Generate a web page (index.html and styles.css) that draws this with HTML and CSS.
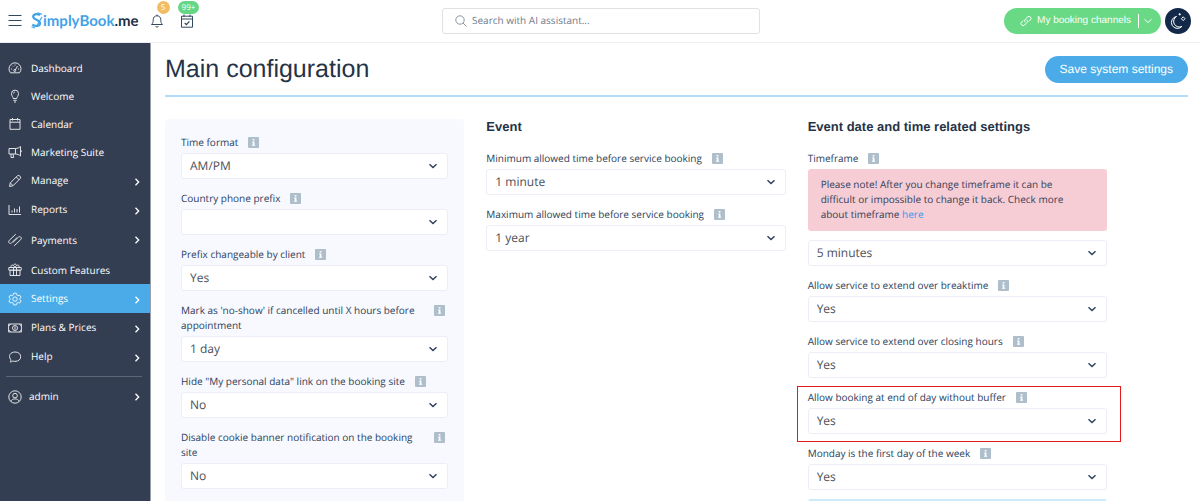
FILE: index.html
```html
<!DOCTYPE html>
<html lang="en">
<head>
<meta charset="utf-8">
<title>Main configuration</title>
<link rel="stylesheet" href="styles.css">
</head>
<body>
<svg class="sprite" aria-hidden="true">
  <symbol id="chev-down" viewBox="0 0 10 10"><path d="M1.5 3.2 5 6.6 8.500 3.200"/></symbol>
  <symbol id="chev-right" viewBox="0 0 10 10"><path d="M3.500 1.700 6.700 5 3.500 8.300"/></symbol>
  <symbol id="info" viewBox="0 0 11 11"><rect width="11" height="11" rx="1" fill="#afbecb" stroke="none"/><path d="M4.700 2h1.700v1.500H4.700zM4.100 4.500h2.300v3.300h.8v1H4v-1h.8V5.500h-.7z" fill="#fff" stroke="none"/></symbol>
</svg>
<header class="topbar">
  <button class="icon-btn menu-btn" aria-label="Menu"><svg viewBox="0 0 14 14"><path d="M.5 1.500h13M.5 6.500h13M.5 11.500h13"/></svg></button>
  <a class="logo" href="#" aria-label="SimplyBook.me">
    <svg class="logo-mark" viewBox="0 0 12 17"><path d="M9 3.400C7.500 1.500 2.200 1.600 2.200 4.800c0 3.300 6.800 2.700 6.800 6.400 0 3-4.500 3.700-7.700 1.500" stroke-width="2.200"/><path d="M6.500.8 11 2.300M.5 14.800l3.500 1.200M11 5 5 15" stroke-width="1.200"/></svg>
    <span class="logo-text">implyBook<span class="logo-me">.me</span></span>
  </a>
  <button class="icon-btn notice" aria-label="Notifications"><svg viewBox="0 0 14 14"><path d="M7 .6v1.200M1.500 10.500h11c-1.200-1.200-1.700-2-1.700-4.800 0-2.400-1.500-3.900-3.800-3.900S3.200 3.300 3.200 5.700c0 2.800-.5 3.600-1.700 4.800zM5.500 12.200c.5 1.200 2.500 1.200 3 0"/></svg><span class="badge badge-warn">5</span></button>
  <button class="icon-btn notice" aria-label="Tasks"><svg viewBox="0 0 14 14"><path d="M1.500 2.200h11v11h-11zM1.500 5h11M4 .5v2.500M10 .5v2.500"/><path d="m4.700 9 1.700 1.600 3-3.200" stroke-width="1.300"/></svg><span class="badge badge-ok">99+</span></button>
  <label class="search">
    <svg viewBox="0 0 12 12"><circle cx="5" cy="5" r="4.200"/><path d="m8 8 3.500 3.500"/></svg>
    <input type="search" placeholder="Search with AI assistant..." aria-label="Search">
  </label>
  <div class="top-actions">
    <button class="channels"><svg class="link-ico" viewBox="0 0 12 12"><path d="M5.200 7.200a2 2 0 0 1 0-2.900l2.300-2.300a2 2 0 0 1 2.900 2.900L8.800 6.500M6.800 4.800a2 2 0 0 1 0 2.900L4.500 10a2 2 0 0 1-2.900-2.900l1.600-1.600"/></svg><span>My booking channels</span><i class="split"></i><svg class="mini"><use href="#chev-down"/></svg></button>
    <button class="theme" aria-label="Dark mode"><svg viewBox="0 0 18 18"><path d="M7.500 4.500A6 6 0 1 0 13 14.300 5.500 5.500 0 0 1 7.500 4.500z"/><path d="m14.200 4.800 1.800 1.900-1.800 1.900-1.800-1.900zM10.700 1.200v2.200M9.600 2.300h2.200"/></svg></button>
  </div>
</header>
<div class="body">
  <nav class="sidebar">
    <ul class="nav">
      <li><a href="#"><svg viewBox="0 0 14 14"><path d="M2.500 11.800a6 6 0 1 1 9 0zM7 9.500l2.500-4.500M3 8h1M10 8h1M4.300 4.700l.7.700M7 3.500v1"/><circle cx="6.700" cy="9.500" r="1"/></svg>Dashboard</a></li>
      <li><a href="#"><svg viewBox="0 0 14 14"><path d="M5.200 9.500C5.200 8 3.500 7 3.500 4.600a3.500 3.500 0 0 1 7 0C10.500 7 8.800 8 8.800 9.500zM5.300 11.300h3.400M6 13h2M5.500 4.500C5.500 3.500 6 3 7 3"/></svg>Welcome</a></li>
      <li><a href="#"><svg viewBox="0 0 14 14"><path d="M2 2.500h10v9.800H2zM2 5.200h10M4.500 1v2.500M9.500 1v2.500"/></svg>Calendar</a></li>
      <li><a href="#"><svg viewBox="0 0 14 14"><path d="M1 3.500h6.500c2 0 3.500-.8 5-2v9.500c-1.500-1.200-3-2-5-2H1zM7.500 3.500V9M3 9v3.500h2.700L5 9M12.500 5c1.200.5 1.200 2 0 2.500"/></svg>Marketing Suite</a></li>
      <li class="sub"><a href="#"><svg viewBox="0 0 14 14"><path d="m1.500 12.500.8-3.600L9.600 1.600c1.200-1.200 4 1.600 2.800 2.800l-7.300 7.300zM8.300 3l2.800 2.800M2.300 8.900l2.800 2.800"/></svg>Manage<svg class="chev"><use href="#chev-right"/></svg></a></li>
      <li class="sub"><a href="#"><svg viewBox="0 0 14 14"><path d="M1 2v9.500h12M4 9.500v-2M6.500 9.500v-4M9 9.500V6M11.500 9.500v-6"/></svg>Reports<svg class="chev"><use href="#chev-right"/></svg></a></li>
      <li class="tall"><a href="#"><svg viewBox="0 0 14 14"><path d="M7.800 1.200 1.300 7.300c-1.700 1.800.5 4.200 2.300 2.500L9 4.700M6.200 12.800l6.500-6.100c1.700-1.800-.5-4.200-2.300-2.500L5 9.300"/></svg>Payments<svg class="chev"><use href="#chev-right"/></svg></a></li>
      <li><a href="#"><svg viewBox="0 0 14 14"><path d="M.8 4.500h12.400v2.700H.8zM2 7.200h10v5.300H2zM5.500 4.500v8M8.500 4.500v8M7 4.300C5 1 2.500 1.500 3 4.300M7 4.300c2-3.300 4.500-2.800 4 0M5.500 2 7 .8 8.500 2"/></svg>Custom Features</a></li>
      <li class="sub active"><a href="#"><svg viewBox="0 0 14 14"><path d="m5.700 1.200-.4 1.700-1.400.8-1.700-.5-1.300 2.200L2.200 6.600v1L.9 8.800 2.200 11l1.700-.5 1.400.8.4 1.600h2.600l.4-1.600 1.400-.8 1.700.5 1.300-2.200-1.300-1.200v-1l1.300-1.200-1.300-2.200-1.700.5-1.400-.8-.4-1.700z"/><circle cx="7" cy="7.100" r="2.200"/></svg>Settings<svg class="chev"><use href="#chev-right"/></svg></a></li>
      <li class="sub"><a href="#"><svg viewBox="0 0 14 14"><path d="M.6 3h12.800v8H.6zM.6 5.200l2-2.200M13.400 5.200l-2-2.200M.6 8.800l2 2.200M13.400 8.800l-2 2.200M7 5.500v3"/><circle cx="7" cy="7" r="2.500"/></svg>Plans &amp; Prices<svg class="chev"><use href="#chev-right"/></svg></a></li>
      <li class="sub"><a href="#"><svg viewBox="0 0 14 14"><path d="M2 12c1-.8 1-1.500.6-2.600C-.2 5.500 2.800 2 7 2c3.500 0 5.700 2 5.700 4.700S10.500 11.400 7 11.400c-1 0-1.700-.2-2.300-.4C4 11.600 3 12 2 12z"/></svg>Help<svg class="chev"><use href="#chev-right"/></svg></a></li>
    </ul>
    <a class="account" href="#"><svg viewBox="0 0 14 14"><circle cx="7" cy="7" r="6.200"/><circle cx="7" cy="5.600" r="2.300"/><path d="M3 11.500c.5-3.500 7.500-3.500 8 0"/></svg>admin<svg class="chev"><use href="#chev-right"/></svg></a>
  </nav>
  <main class="content">
    <div class="page-head">
      <h1>Main configuration</h1>
      <button class="save">Save system settings</button>
    </div>
    <form class="columns">
      <section class="panel">
        <div class="field"><div class="caption"><label for="tf">Time format</label><svg class="info"><use href="#info"/></svg></div><div class="pick"><select id="tf"><option>AM/PM</option></select><svg><use href="#chev-down"/></svg></div></div>
        <div class="field"><div class="caption"><label for="cp">Country phone prefix</label><svg class="info"><use href="#info"/></svg></div><div class="pick"><select id="cp"><option></option></select><svg><use href="#chev-down"/></svg></div></div>
        <div class="field"><div class="caption"><label for="pc">Prefix changeable by client</label><svg class="info"><use href="#info"/></svg></div><div class="pick"><select id="pc"><option>Yes</option></select><svg><use href="#chev-down"/></svg></div></div>
        <div class="field"><div class="caption"><label for="ns">Mark as 'no-show' if cancelled until X hours before appointment</label><svg class="info"><use href="#info"/></svg></div><div class="pick"><select id="ns"><option>1 day</option></select><svg><use href="#chev-down"/></svg></div></div>
        <div class="field"><div class="caption"><label for="hp">Hide "My personal data" link on the booking site</label><svg class="info"><use href="#info"/></svg></div><div class="pick"><select id="hp"><option>No</option></select><svg><use href="#chev-down"/></svg></div></div>
        <div class="field"><div class="caption"><label for="dc">Disable cookie banner notification on the booking site</label><svg class="info"><use href="#info"/></svg></div><div class="pick"><select id="dc"><option>No</option></select><svg><use href="#chev-down"/></svg></div></div>
      </section>
      <section>
        <h2>Event</h2>
        <div class="field"><div class="caption"><label for="mn">Minimum allowed time before service booking</label><svg class="info"><use href="#info"/></svg></div><div class="pick"><select id="mn"><option>1 minute</option></select><svg><use href="#chev-down"/></svg></div></div>
        <div class="field"><div class="caption"><label for="mx">Maximum allowed time before service booking</label><svg class="info"><use href="#info"/></svg></div><div class="pick"><select id="mx"><option>1 year</option></select><svg><use href="#chev-down"/></svg></div></div>
      </section>
      <section>
        <h2>Event date and time related settings</h2>
        <div class="field"><div class="caption"><label for="fr">Timeframe</label><svg class="info"><use href="#info"/></svg></div><p class="alert">Please note! After you change timeframe it can be difficult or impossible to change it back. Check more about timeframe <a href="#">here</a></p><div class="pick"><select id="fr"><option>5 minutes</option></select><svg><use href="#chev-down"/></svg></div></div>
        <div class="field"><div class="caption"><label for="eb">Allow service to extend over breaktime</label><svg class="info"><use href="#info"/></svg></div><div class="pick"><select id="eb"><option>Yes</option></select><svg><use href="#chev-down"/></svg></div></div>
        <div class="field"><div class="caption"><label for="ec">Allow service to extend over closing hours</label><svg class="info"><use href="#info"/></svg></div><div class="pick"><select id="ec"><option>Yes</option></select><svg><use href="#chev-down"/></svg></div></div>
        <div class="field marked"><div class="caption"><label for="ab">Allow booking at end of day without buffer</label><svg class="info"><use href="#info"/></svg></div><div class="pick"><select id="ab"><option>Yes</option></select><svg><use href="#chev-down"/></svg></div></div>
        <div class="field last"><div class="caption"><label for="mo">Monday is the first day of the week</label><svg class="info"><use href="#info"/></svg></div><div class="pick"><select id="mo"><option>Yes</option></select><svg><use href="#chev-down"/></svg></div></div>
        <div class="tip"></div>
      </section>
    </form>
  </main>
</div>
</body>
</html>
```
FILE: styles.css
```css
* { box-sizing: border-box; }
body {
  margin: 0;
  height: 100vh;
  display: flex;
  flex-direction: column;
  font: 10px/15px "Open Sans", "Noto Sans", sans-serif;
  text-rendering: geometricPrecision;
  color: #2c405a;
  background: #fff;
}
svg { fill: none; stroke: currentColor; flex: none; }
.sprite { display: none; }
button, input, select { text-rendering: inherit; }
button { font: inherit; border: 0; cursor: pointer; }
a { color: inherit; text-decoration: none; }

.topbar {
  display: flex;
  align-items: center;
  height: 43px;
  flex: none;
  padding: 0 9px 1px 8px;
  border-bottom: 1px solid #eeeef5;
  position: relative;
}
.icon-btn { background: none; padding: 0; color: #33475f; position: relative; display: flex; }
.icon-btn svg { width: 14px; height: 14px; }
.menu-btn { margin-right: 9px; }
.logo { display: flex; align-items: center; color: #3fa3e8; margin-right: 11px; }
.logo-mark { width: 12px; height: 17px; }
.logo-text { font: 700 15px/20px Lato, sans-serif; }
.logo-me { color: #1f3047; }
.notice { margin-right: 16px; }
.badge {
  position: absolute;
  left: 7px;
  bottom: 14px;
  min-width: 13px;
  height: 13px;
  padding: 0 4px;
  border-radius: 7px;
  color: #fff;
  font-size: 8px;
  line-height: 13px;
}
.badge-warn { background: #f2bd62; }
.badge-ok { background: #64d684; left: -2px; }
.search {
  position: absolute;
  left: 50%;
  transform: translateX(-50%);
  width: 26.5%;
  height: 26px;
  margin-left: 1px;
  border: 1px solid #dfe1e5;
  border-radius: 3px;
  display: flex;
  align-items: center;
  gap: 5px;
  padding: 0 12px;
  color: #8b96a5;
}
.search svg { width: 12px; height: 12px; }
.search input { border: 0; outline: 0; flex: 1; min-width: 0; padding: 0; font: inherit; background: none; }
.search input::placeholder { color: #6f7c8d; opacity: 1; }
.top-actions { margin-left: auto; display: flex; gap: 4px; }
.channels {
  display: flex;
  align-items: center;
  height: 26px;
  padding: 0 8px 0 16px;
  border-radius: 14px;
  background: #69d986;
  color: #fff;
  font: 10px/14px "Liberation Sans", Arial, sans-serif;
}
.link-ico { width: 12px; height: 12px; margin-right: 5px; }
.split { width: 1px; height: 14px; background: #fff; margin: 0 4px 0 7px; }
.mini { width: 10px; height: 10px; }
.theme { width: 26px; height: 26px; padding: 0; border-radius: 50%; background: #12294a; color: #fff; display: grid; place-items: center; }
.theme svg { width: 18px; height: 18px; }

.body { flex: 1; display: flex; min-height: 0; }
.sidebar {
  width: 151px;
  flex: none;
  background: #343e52;
  border-right: 1px solid #9aa0ab;
  color: #fff;
  padding-top: 11px;
}
.nav { list-style: none; margin: 0; padding: 0; }
.nav li { height: 28px; }
.nav .sub { height: 29px; }
.nav .tall { height: 32px; }
.nav a, .account { display: flex; align-items: center; height: 100%; padding: 0 8px; gap: 9px; }
.nav svg, .account svg { width: 14px; height: 14px; stroke-width: 1px; opacity: .85; }
.nav .chev, .account .chev { width: 10px; height: 10px; margin-left: auto; stroke-width: 1.3px; opacity: 1; }
.sub .chev { align-self: flex-end; margin-bottom: 8px; }
.active { background: #4babe8; }
.account { height: 40px; margin: 5px 8px 0 6px; padding: 0 0 0 2px; gap: 7px; border-top: 1px solid #5d6677; }

.content { flex: 1; min-width: 0; padding: 0 12px 0 14px; overflow: auto; scrollbar-width: none; }
.page-head { display: flex; justify-content: space-between; align-items: center; height: 54px; border-bottom: 2px solid #b0dcf7; }
h1 { margin: 0; font: 25px/30px "Liberation Sans", Arial, sans-serif; color: #263347; }
.save {
  height: 27px;
  padding: 0 15px;
  border-radius: 14px;
  background: #4babe8;
  color: #fff;
  font: 12px/15px "Liberation Sans", Arial, sans-serif;
}
.columns { display: grid; grid-template-columns: repeat(3, 1fr); gap: 22px; padding: 22px 81px 0 0; }
h2 { margin: 0 0 16px; font: 700 13px/16px "Liberation Sans", Arial, sans-serif; color: #263347; }
.panel { background: #f8f9fe; border-radius: 4px; padding: 16px; }
.field { margin-bottom: 12px; position: relative; }
.field.last { margin-bottom: 9px; }
.caption { display: flex; justify-content: flex-start; gap: 10px; margin-bottom: 3px; }
.info { width: 11px; height: 11px; margin: 2px 3px 0 0; }
.pick { position: relative; }
.pick svg { position: absolute; right: 10px; top: 8px; width: 10px; height: 10px; stroke-width: 1.4px; pointer-events: none; }
select {
  display: block;
  appearance: none;
  width: 100%;
  height: 26px;
  padding: 0 8px;
  border: 1px solid #ecedf7;
  border-radius: 3px;
  background: #fff;
  color: #4b5058;
  font: 12px/16px "Open Sans", "Noto Sans", sans-serif;
}
.alert { margin: 0 0 9px; padding: 8px 24px 9px 13px; border-radius: 3px; background: #f6cdd5; color: #344058; }
.alert a { color: #2f9be8; }
.marked::after { content: ""; position: absolute; inset: -4px -14px -8px -11px; border: 1px solid #e3191c; pointer-events: none; }
.tip { height: 50px; border-radius: 3px; background: #cdeafb; }
```
